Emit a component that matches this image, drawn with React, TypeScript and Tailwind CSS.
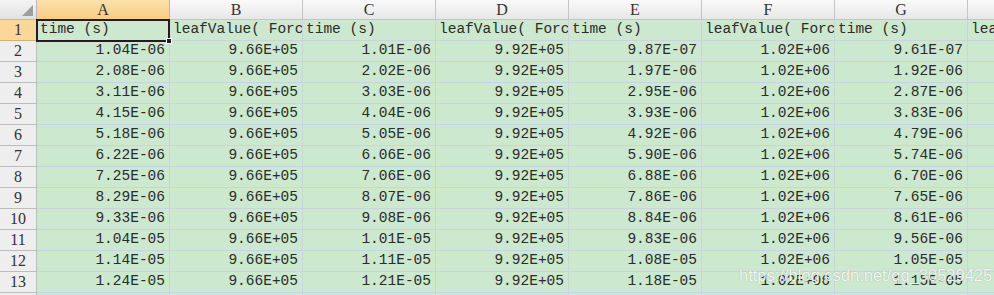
const cols = ["A", "B", "C", "D", "E", "F", "G", "H"];

const head = [
  "time (s)",
  "leafValue( Force)",
  "time (s)",
  "leafValue( Force)",
  "time (s)",
  "leafValue( Force)",
  "time (s)",
  "leafValue( Force)",
];

const colA = ["1.04E-06", "2.08E-06", "3.11E-06", "4.15E-06", "5.18E-06", "6.22E-06", "7.25E-06", "8.29E-06", "9.33E-06", "1.04E-05", "1.14E-05", "1.24E-05"];
const colC = ["1.01E-06", "2.02E-06", "3.03E-06", "4.04E-06", "5.05E-06", "6.06E-06", "7.06E-06", "8.07E-06", "9.08E-06", "1.01E-05", "1.11E-05", "1.21E-05"];
const colE = ["9.87E-07", "1.97E-06", "2.95E-06", "3.93E-06", "4.92E-06", "5.90E-06", "6.88E-06", "7.86E-06", "8.84E-06", "9.83E-06", "1.08E-05", "1.18E-05"];
const colG = ["9.61E-07", "1.92E-06", "2.87E-06", "3.83E-06", "4.79E-06", "5.74E-06", "6.70E-06", "7.65E-06", "8.61E-06", "9.56E-06", "1.05E-05", "1.15E-05"];

const rows = colA.map((a, i) => [a, "9.66E+05", colC[i], "9.92E+05", colE[i], "1.02E+06", colG[i], ""]);

const App = () => {
  return (
    <div className="relative w-[994px] h-[295px] overflow-hidden bg-white font-['Liberation_Mono',monospace] text-[14.5px] text-[#2b2b2b]">
      {/* 列ヘッダー */}
      <div className="flex h-[20px] font-['Liberation_Serif',serif] text-[16px] text-[#333]">
        <div className="relative w-[37px] shrink-0 border-r border-b border-[#b9b9b9] bg-linear-to-b from-[#f4f4f4] to-[#e2e2e2]">
          <svg className="absolute right-[3px] bottom-[3px]" width="11" height="11" viewBox="0 0 11 11">
            <polygon points="11,0 11,11 0,11" fill="#9e9e9e" />
          </svg>
        </div>
        {cols.map((c, i) => (
          <div
            key={c}
            className={
              i === 0
                ? "w-[133px] shrink-0 flex items-center justify-center border-r border-r-[#d9b36e] border-b border-b-[#f29436] bg-linear-to-b from-[#fbe1ab] to-[#f7cd83]"
                : "w-[133px] shrink-0 flex items-center justify-center border-r border-b border-[#c5c5c5] bg-linear-to-b from-[#fafafa] to-[#e7e7e7]"
            }
          >
            {c}
          </div>
        ))}
      </div>

      {/* 1行目 */}
      <div className="flex h-[21px]">
        <div className="w-[37px] shrink-0 flex items-center justify-center border-r border-r-[#f29436] border-b border-b-[#d7b16c] bg-[#fcd79a] font-['Liberation_Serif',serif] text-[16px] text-[#333]">
          1
        </div>
        {head.map((t, i) => (
          <div
            key={i}
            className="relative w-[133px] shrink-0 flex items-center pl-[3px] whitespace-nowrap overflow-hidden border-r border-b border-[#cdd2e3] bg-[#cce8cf]"
          >
            {t}
          </div>
        ))}
      </div>

      {/* データ */}
      {rows.map((r, ri) => (
        <div key={ri} className="flex h-[21px]">
          <div className="w-[37px] shrink-0 flex items-center justify-center border-r border-b border-[#bdbdbd] bg-[#eeeeee] font-['Liberation_Serif',serif] text-[16px] text-[#333]">
            {ri + 2}
          </div>
          {r.map((v, ci) => (
            <div
              key={ci}
              className="w-[133px] shrink-0 flex items-center justify-end pr-[4px] whitespace-nowrap border-r border-b border-[#cdd2e3] bg-[#cce8cf]"
            >
              {v}
            </div>
          ))}
        </div>
      ))}
      <div className="flex h-[21px]">
        <div className="w-[37px] shrink-0 border-r border-[#bdbdbd] bg-[#eeeeee]" />
        {cols.map((c) => (
          <div key={c} className="w-[133px] shrink-0 border-r border-[#cdd2e3] bg-[#cce8cf]" />
        ))}
      </div>

      {/* 選択枠 */}
      <div className="absolute left-[36px] top-[19px] w-[134px] h-[23px] border-2 border-[#231a23] pointer-events-none" />
      <div className="absolute left-[166px] top-[38px] w-[6px] h-[6px] bg-[#231a23] border border-white" />

      {/* ウォーターマーク */}
      <div className="absolute left-[739px] top-[263px] font-['Liberation_Sans',Arial,sans-serif] text-[16.5px] text-white/90 [text-shadow:0_0_1px_rgba(0,0,0,0.35)]">
        https://blog.csdn.net/qq_30529425
      </div>
    </div>
  );
};

export default App;
